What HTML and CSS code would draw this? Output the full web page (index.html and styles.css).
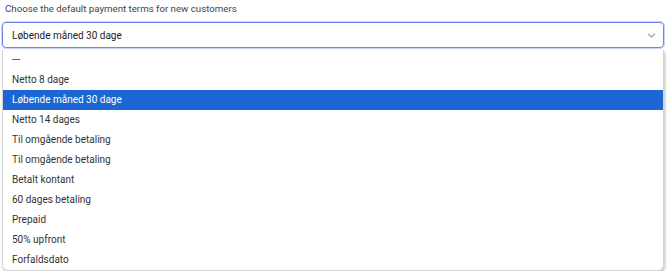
FILE: index.html
```html
<!DOCTYPE html>
<html lang="en">
<head>
    <meta charset="UTF-8">
    <title>Payment terms</title>
    <link rel="stylesheet" href="styles.css">
</head>
<body>
    <div class="field">
        <label class="label">Choose the default payment terms for new customers</label>
        <div class="select">
            <span>Løbende måned 30 dage</span>
            <svg class="chevron" width="9" height="5" viewBox="0 0 9 5"><path d="M1 0.8 L4.5 4 L8 0.8" fill="none" stroke="#9a9a9a" stroke-width="1.1"/></svg>
        </div>
        <ul class="options">
            <li>---</li>
            <li>Netto 8 dage</li>
            <li class="selected">Løbende måned 30 dage</li>
            <li>Netto 14 dages</li>
            <li>Til omgående betaling</li>
            <li>Til omgående betaling</li>
            <li>Betalt kontant</li>
            <li>60 dages betaling</li>
            <li>Prepaid</li>
            <li>50% upfront</li>
            <li>Forfaldsdato</li>
        </ul>
    </div>
</body>
</html>
```

FILE: styles.css
```css
body {
    margin: 0;
    background: #fff;
    font-family: Roboto, "Open Sans", Arial, sans-serif;
    font-size: 10px;
    color: #333;
}

.field {
    padding: 1px 6px 0 2px;
}

.label {
    display: block;
    height: 21px;
    line-height: 15px;
    padding-left: 3px;
    font-size: 9.7px;
    color: #444;
}

.select {
    height: 24px;
    border: 1px solid #6f86e6;
    border-radius: 4px;
    box-shadow: 0 0 0 1px #c9d2f7;
    display: flex;
    align-items: center;
    justify-content: space-between;
    padding: 0 7px 0 9px;
    color: #222;
}

.chevron {
    margin-top: 1px;
}

.options {
    list-style: none;
    margin: 2px 0 0 0;
    padding: 0;
    border: 1px solid #d4d4d4;
    border-top: none;
    border-radius: 0 0 6px 6px;
    box-shadow: 1px 2px 3px rgba(0, 0, 0, 0.25);
}

.options li {
    height: 20px;
    line-height: 20px;
    padding-left: 9px;
    color: #333;
}

.options li.selected {
    background: #1b66d2;
    color: #fff;
}
```
